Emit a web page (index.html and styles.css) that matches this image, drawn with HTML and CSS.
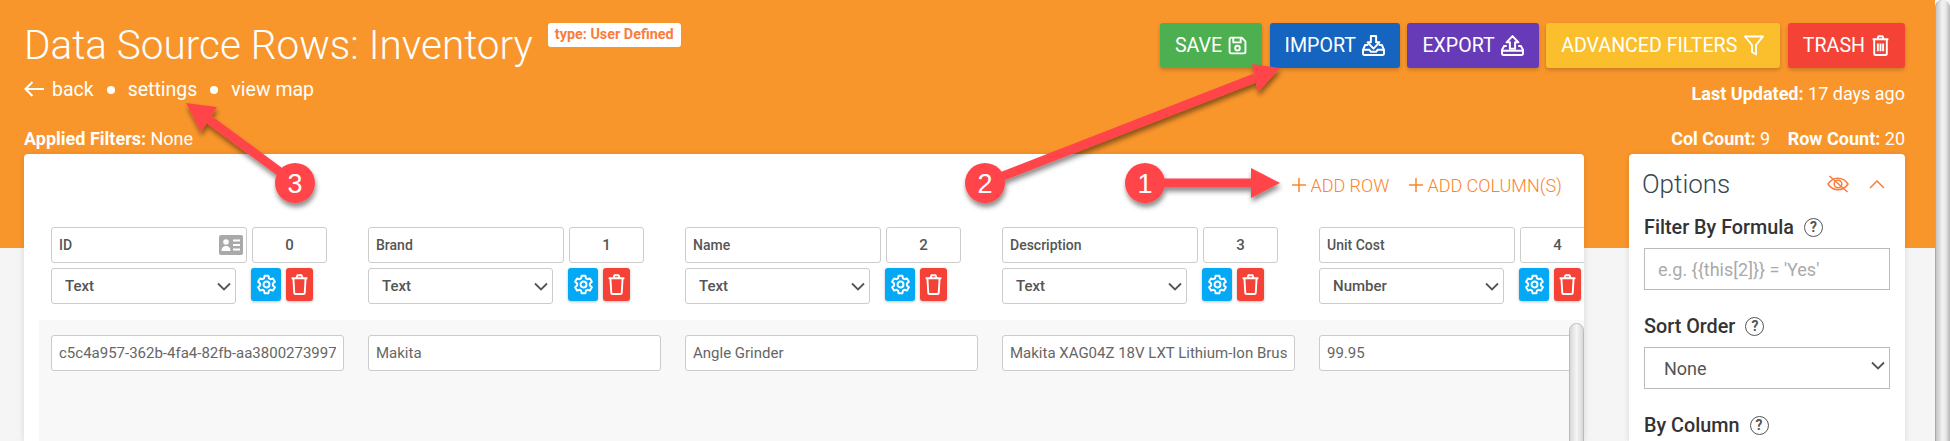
FILE: index.html
```html
<!DOCTYPE html>
<html lang="en">

<head>
  <meta charset="UTF-8">
  <title>Data Source Rows: Inventory</title>
  <link rel="stylesheet" href="styles.css">
</head>

<body>
  <svg class="sprite">
    <symbol id="i-save" viewBox="0 0 18 18" fill="none" stroke="currentColor" stroke-width="1.8">
      <path d="M3 1.500h10l3.500 3.500v10a1.500 1.500 0 0 1-1.500 1.500H3A1.500 1.500 0 0 1 1.500 15V3A1.500 1.500 0 0 1 3 1.500z" />
      <path d="M5 1.500v4.500h7V1.500" />
      <circle cx="9" cy="11.500" r="2.200" />
    </symbol>
    <symbol id="i-import" viewBox="0 0 22 20" fill="none" stroke="currentColor" stroke-width="1.9">
      <path d="M8.500 1h5v6h3.200L11 13 5.300 7h3.200z" stroke-linejoin="round" />
      <path d="M6 9.500H3L1 14v4a1 1 0 0 0 1 1h18a1 1 0 0 0 1-1v-4l-2-4.500h-3" />
      <path d="M1 14h6l1.500 2h5l1.500-2h6" />
    </symbol>
    <symbol id="i-export" viewBox="0 0 22 20" fill="none" stroke="currentColor" stroke-width="1.9">
      <path d="M8.500 13V7H5.300L11 1l5.700 6h-3.200v6z" stroke-linejoin="round" />
      <path d="M5.500 10.500H3L1 14v4a1 1 0 0 0 1 1h18a1 1 0 0 0 1-1v-4l-2-3.500h-2.500" />
      <path d="M1 15h20" />
    </symbol>
    <symbol id="i-filter" viewBox="0 0 21 21" fill="none" stroke="currentColor" stroke-width="1.9" stroke-linejoin="round">
      <path d="M1.500 1.500h18l-7 8.500v9.500l-4-2.500v-7z" />
    </symbol>
    <symbol id="i-trash" viewBox="0 0 17 20" fill="none" stroke="currentColor" stroke-width="1.800" stroke-linejoin="round">
      <path d="M1 4h15M5.500 4l1-2.800h4l1 2.800" />
      <path d="M2.500 4v13.500a1.500 1.500 0 0 0 1.500 1.500h9a1.500 1.500 0 0 0 1.500-1.500V4" />
      <path d="M6 8v7.500M8.500 8v7.500M11 8v7.500" />
    </symbol>
    <symbol id="i-bin" viewBox="0 0 17 20" fill="none" stroke="currentColor" stroke-width="1.800" stroke-linejoin="round">
      <path d="M1 4h15M5.500 4l1-2.800h4l1 2.800" />
      <path d="M2.700 4l.8 13.500a1.500 1.500 0 0 0 1.500 1.500h7a1.500 1.500 0 0 0 1.500-1.500L14.300 4" />
    </symbol>
    <symbol id="i-gear" viewBox="0 0 24 24" fill="none" stroke="currentColor" stroke-width="2.200" stroke-linejoin="round">
      <path d="M9.800 2h4.400l.6 3 1.700 1 2.900-1 2.200 3.800-2.300 2v2.400l2.300 2-2.200 3.800-2.900-1-1.700 1-.6 3H9.800l-.6-3-1.700-1-2.900 1-2.200-3.800 2.300-2v-2.400l-2.300-2L4.600 5l2.900 1 1.700-1z" />
      <circle cx="12" cy="12" r="3.400" />
    </symbol>
    <symbol id="i-down" viewBox="0 0 14 9" fill="none" stroke="currentColor" stroke-width="1.800">
      <path d="M1 1.500l6 6 6-6" />
    </symbol>
    <symbol id="i-plus" viewBox="0 0 14 14" fill="none" stroke="currentColor" stroke-width="1.500">
      <path d="M7 0v14M0 7h14" />
    </symbol>
  </svg>

  <div class="page">
    <header class="top">
      <div>
        <div class="title-row">
          <h1>Data Source Rows: Inventory</h1>
          <span class="badge">type: User Defined</span>
        </div>
        <nav class="crumbs">
          <svg class="back-arrow" viewBox="0 0 20 16" fill="none" stroke="currentColor" stroke-width="2">
            <path d="M8.500 1L1.500 8l7 7M1.500 8H20" />
          </svg>
          <a>back</a>
          <i class="dot"></i>
          <a>settings</a>
          <i class="dot"></i>
          <a>view map</a>
        </nav>
      </div>
      <div class="top-right">
        <div class="actions">
          <button class="btn btn-save">Save <svg class="ico"><use href="#i-save" /></svg></button>
          <button class="btn btn-import">Import <svg class="ico ico-wide"><use href="#i-import" /></svg></button>
          <button class="btn btn-export">Export <svg class="ico ico-wide"><use href="#i-export" /></svg></button>
          <button class="btn btn-filters">Advanced Filters <svg class="ico ico-funnel"><use href="#i-filter" /></svg></button>
          <button class="btn btn-trash">Trash <svg class="ico"><use href="#i-trash" /></svg></button>
        </div>
        <p class="updated"><b>Last Updated:</b> 17 days ago</p>
      </div>
    </header>

    <div class="counts">
      <p><b>Applied Filters:</b> None</p>
      <p><b>Col Count:</b> 9 <b class="row-count">Row Count:</b> 20</p>
    </div>

    <div class="cards">
      <section class="card grid-card">
        <div class="tools">
          <a class="add"><svg class="plus"><use href="#i-plus" /></svg>ADD ROW</a>
          <a class="add"><svg class="plus"><use href="#i-plus" /></svg>ADD COLUMN(S)</a>
        </div>

        <div class="cols">
          <div class="col">
            <div class="col-line">
              <div class="name-box">
                <input class="box name" value="ID">
                <svg class="id-card" viewBox="0 0 24 20">
                  <rect width="24" height="20" rx="2" fill="#a9a9a9" />
                  <circle cx="7" cy="7" r="2.800" fill="#fff" />
                  <path d="M2.500 16c0-3.500 2-5 4.500-5s4.500 1.500 4.500 5z" fill="#fff" />
                  <path d="M14 5.500h7M14 10h7M14 14.500h7" stroke="#fff" stroke-width="1.800" />
                </svg>
              </div>
              <input class="box idx" value="0">
            </div>
            <div class="col-line">
              <div class="select-box"><select class="box pick"><option>Text</option></select><svg class="caret"><use href="#i-down" /></svg></div>
              <button class="sq sq-gear"><svg class="sq-ico"><use href="#i-gear" /></svg></button>
              <button class="sq sq-bin"><svg class="sq-ico"><use href="#i-bin" /></svg></button>
            </div>
          </div>
          <div class="col">
            <div class="col-line">
              <div class="name-box"><input class="box name" value="Brand"></div>
              <input class="box idx" value="1">
            </div>
            <div class="col-line">
              <div class="select-box"><select class="box pick"><option>Text</option></select><svg class="caret"><use href="#i-down" /></svg></div>
              <button class="sq sq-gear"><svg class="sq-ico"><use href="#i-gear" /></svg></button>
              <button class="sq sq-bin"><svg class="sq-ico"><use href="#i-bin" /></svg></button>
            </div>
          </div>
          <div class="col">
            <div class="col-line">
              <div class="name-box"><input class="box name" value="Name"></div>
              <input class="box idx" value="2">
            </div>
            <div class="col-line">
              <div class="select-box"><select class="box pick"><option>Text</option></select><svg class="caret"><use href="#i-down" /></svg></div>
              <button class="sq sq-gear"><svg class="sq-ico"><use href="#i-gear" /></svg></button>
              <button class="sq sq-bin"><svg class="sq-ico"><use href="#i-bin" /></svg></button>
            </div>
          </div>
          <div class="col">
            <div class="col-line">
              <div class="name-box"><input class="box name" value="Description"></div>
              <input class="box idx" value="3">
            </div>
            <div class="col-line">
              <div class="select-box"><select class="box pick"><option>Text</option></select><svg class="caret"><use href="#i-down" /></svg></div>
              <button class="sq sq-gear"><svg class="sq-ico"><use href="#i-gear" /></svg></button>
              <button class="sq sq-bin"><svg class="sq-ico"><use href="#i-bin" /></svg></button>
            </div>
          </div>
          <div class="col">
            <div class="col-line">
              <div class="name-box"><input class="box name" value="Unit Cost"></div>
              <input class="box idx" value="4">
            </div>
            <div class="col-line">
              <div class="select-box"><select class="box pick"><option>Number</option></select><svg class="caret"><use href="#i-down" /></svg></div>
              <button class="sq sq-gear"><svg class="sq-ico"><use href="#i-gear" /></svg></button>
              <button class="sq sq-bin"><svg class="sq-ico"><use href="#i-bin" /></svg></button>
            </div>
          </div>
        </div>

        <div class="rows-panel">
          <div class="rows">
            <input class="box cell" value="c5c4a957-362b-4fa4-82fb-aa3800273997">
            <input class="box cell" value="Makita">
            <input class="box cell" value="Angle Grinder">
            <input class="box cell" value="Makita XAG04Z 18V LXT Lithium-Ion Brushless Cordless">
            <input class="box cell" value="99.95">
          </div>
          <div class="thumb"></div>
        </div>
      </section>

      <aside class="card options">
        <div class="opt-head">
          <h2>Options</h2>
          <svg class="eye" viewBox="0 0 22 18" fill="none" stroke="#f97d3c" stroke-width="1.500">
            <path d="M1 9c2.500-3.800 6-5.800 10-5.800S18.500 5.200 21 9c-2.500 3.800-6 5.800-10 5.800S3.500 12.800 1 9z" />
            <circle cx="11" cy="9" r="3.800" />
            <path d="M2.500 1L20.500 17" />
          </svg>
          <svg class="chev" viewBox="0 0 16 9" fill="none" stroke="#f97d3c" stroke-width="1.500">
            <path d="M1 8l7-7 7 7" />
          </svg>
        </div>
        <div class="field">
          <label>Filter By Formula <i class="help">?</i></label>
          <input class="opt-input" placeholder="e.g. {{this[2]}} = 'Yes'">
        </div>
        <div class="field">
          <label>Sort Order <i class="help">?</i></label>
          <div class="select-box">
            <select class="opt-input opt-select"><option>None</option></select>
            <svg class="caret"><use href="#i-down" /></svg>
          </div>
        </div>
        <div class="field">
          <label>By Column <i class="help">?</i></label>
        </div>
      </aside>
    </div>
  </div>

  <div class="vbar"></div>

  <!-- tutorial callouts drawn on top of the screenshot -->
  <svg class="callouts" viewBox="0 0 1950 441">
    <defs>
      <filter id="drop" x="-20%" y="-20%" width="140%" height="150%">
        <feDropShadow dx="1" dy="4" stdDeviation="2.500" flood-color="#000" flood-opacity=".45" />
      </filter>
    </defs>
    <g filter="url(#drop)" fill="#ff4548">
      <path d="M295 183L209 119.500" stroke="#ff4548" stroke-width="9" />
      <path d="M186 103L217 107L201 132z" />
      <circle cx="295" cy="183" r="20" />
    </g>
    <g filter="url(#drop)" fill="#ff4548">
      <path d="M985 183L1255 78" stroke="#ff4548" stroke-width="9" />
      <path d="M1280 68L1252 64L1258 92z" />
      <circle cx="985" cy="183" r="20" />
    </g>
    <g filter="url(#drop)" fill="#ff4548">
      <path d="M1145 183H1252" stroke="#ff4548" stroke-width="9" />
      <path d="M1280 183L1251 168V198z" />
      <circle cx="1145" cy="183" r="20" />
    </g>
    <text class="callout-num" x="295" y="193">3</text>
    <text class="callout-num" x="985" y="193">2</text>
    <text class="callout-num" x="1145" y="193">1</text>
  </svg>
</body>

</html>
```

FILE: styles.css
```css
* {
  margin: 0;
  padding: 0;
  box-sizing: border-box;
  font-family: Roboto, "Liberation Sans", sans-serif;
}

html,
body {
  height: 441px;
  overflow: hidden;
}

body {
  display: flex;
  position: relative;
  background-color: #f5f5f5;
}

.sprite {
  width: 0;
  height: 0;
  position: absolute;
}

.page {
  flex: 1;
  min-width: 0;
  padding: 0 30px 0 24px;
  background: linear-gradient(#f9962b 248px, #f5f5f5 248px);
  color: #fff;
}

.vbar {
  width: 15px;
  border-radius: 8px 8px 0 0;
  border-left: 1px solid #aaa;
  background: linear-gradient(90deg, #c4c4c4, #f2f2f2 45%, #e8e8e8 70%, #b5b5b5);
}

/* header */
.top {
  display: flex;
  justify-content: space-between;
  height: 127px;
}

.title-row {
  display: flex;
  align-items: flex-start;
  padding-top: 21px;
}

h1 {
  font-size: 40.5px;
  line-height: 48px;
  font-weight: 300;
}

.badge {
  margin: 2px 0 0 15px;
  padding: 0 7px;
  height: 24px;
  line-height: 24px;
  background-color: #fff;
  border-radius: 3px;
  color: #f97d3c;
  font-size: 14.4px;
  font-weight: 700;
}

.crumbs {
  display: flex;
  align-items: center;
  height: 28px;
  margin-top: 6px;
  font-size: 19.5px;
}

.back-arrow {
  width: 20px;
  height: 16px;
  margin-right: 8px;
}

.dot {
  width: 8px;
  height: 8px;
  margin: 2px 13px 0;
  border-radius: 50%;
  background-color: #fff;
}

.top-right {
  display: flex;
  flex-direction: column;
  align-items: flex-end;
  padding-top: 23px;
}

.actions {
  display: flex;
  gap: 7.5px;
}

.btn {
  display: flex;
  align-items: center;
  gap: 6px;
  height: 45px;
  padding: 0 15px;
  border: none;
  border-radius: 3px;
  box-shadow: 0 2px 4px rgba(0, 0, 0, 0.2);
  color: #fff;
  font-size: 19.6px;
  text-transform: uppercase;
}

.btn-save { background-color: #4caf50; }
.btn-import { background-color: #1565c0; }
.btn-export { background-color: #673ab7; }
.btn-filters { background-color: #fbbf2d; }
.btn-trash { background-color: #f44336; }

.ico {
  width: 19px;
  height: 21px;
}

.ico-wide {
  width: 23px;
}

.ico-funnel {
  width: 22px;
}

.updated {
  margin-top: 14px;
  font-size: 18px;
  line-height: 24px;
}

.counts {
  display: flex;
  justify-content: space-between;
  height: 24px;
  margin-bottom: 3px;
  font-size: 18px;
  line-height: 24px;
}

b {
  font-weight: 700;
}

.row-count {
  margin-left: 13px;
}

/* cards */
.cards {
  display: flex;
  gap: 45px;
}

.card {
  height: 287px;
  background-color: #fff;
  border-radius: 4px 4px 0 0;
  box-shadow: 0 1px 6px rgba(0, 0, 0, 0.12);
  overflow: hidden;
}

.grid-card {
  width: 1560px;
  flex: none;
  color: #555;
}

.tools {
  display: flex;
  justify-content: flex-end;
  align-items: center;
  gap: 20px;
  height: 62px;
  margin-bottom: 11px;
  padding-right: 22px;
}

.add {
  display: flex;
  align-items: center;
  gap: 4px;
  color: #f8862b;
  font-size: 18px;
  font-weight: 300;
}

.plus {
  width: 14px;
  height: 14px;
}

.cols {
  display: flex;
  padding-left: 27px;
}

.col {
  flex: none;
  width: 317px;
}

.col-line {
  display: flex;
  align-items: flex-start;
  margin-bottom: 5px;
}

.box {
  height: 36px;
  border: 1px solid #ccc;
  border-radius: 3px;
  outline: none;
  background-color: #fff;
  font-size: 14px;
  color: #555;
}

.name-box {
  position: relative;
  width: 196px;
}

.name {
  width: 100%;
  padding-left: 7px;
  font-weight: 500;
}

.id-card {
  position: absolute;
  right: 4px;
  top: 8px;
  width: 24px;
  height: 20px;
}

.idx {
  width: 75px;
  margin-left: 5px;
  text-align: center;
  font-weight: 500;
  font-size: 15px;
}

.select-box {
  position: relative;
}

.pick {
  display: block;
  width: 185px;
  padding-left: 13px;
  appearance: none;
  font-weight: 500;
  font-size: 15px;
}

.caret {
  position: absolute;
  right: 5px;
  top: 14px;
  width: 14px;
  height: 9px;
  color: #555;
  pointer-events: none;
}

.sq {
  display: flex;
  align-items: center;
  justify-content: center;
  height: 33px;
  border: none;
  border-radius: 3px;
  box-shadow: 0 1px 3px rgba(0, 0, 0, 0.25);
  color: #fff;
}

.sq-gear {
  width: 30px;
  margin-left: 15px;
  background-color: #03a9f4;
}

.sq-bin {
  width: 27px;
  margin-left: 5px;
  background-color: #f44336;
}

.sq-ico {
  width: 21px;
  height: 21px;
}

.rows-panel {
  display: flex;
  height: 200px;
  margin: 11px 0 0 15px;
  background-color: #f8f8f8;
}

.rows {
  flex: 1;
  min-width: 0;
  display: flex;
  align-items: flex-start;
  gap: 24px;
  padding: 15px 0 0 12px;
  overflow: hidden;
}

.cell {
  flex: none;
  width: 293px;
  padding: 0 7px;
  font-size: 15px;
  color: #666;
}

.thumb {
  flex: none;
  width: 15px;
  margin-top: 3px;
  border-radius: 8px 8px 0 0;
  border: 1px solid #bbb;
  background: linear-gradient(90deg, #d8d8d8, #f5f5f5 50%, #d8d8d8);
}

/* options */
.options {
  flex: 1;
  padding: 0 15px;
  color: #333;
}

.opt-head {
  display: flex;
  align-items: center;
  height: 60px;
  margin-left: -2px;
}

h2 {
  flex: 1;
  font-size: 26px;
  font-weight: 300;
  color: #37474f;
}

.eye {
  width: 22px;
  height: 18px;
}

.chev {
  width: 16px;
  height: 9px;
  margin: 0 5px 0 20px;
}

.field {
  margin-bottom: 23px;
}

label {
  display: flex;
  align-items: center;
  gap: 10px;
  height: 26px;
  margin-bottom: 8px;
  font-size: 19.8px;
  font-weight: 500;
}

.help {
  width: 19px;
  height: 19px;
  border: 1.500px solid #555;
  border-radius: 50%;
  color: #555;
  font-size: 14px;
  font-style: normal;
  font-weight: 700;
  line-height: 17px;
  text-align: center;
}

.opt-input {
  display: block;
  width: 246px;
  height: 42px;
  padding-left: 13px;
  border: 1px solid #bbb;
  outline: none;
  background-color: #fff;
  font-size: 18px;
  color: #555;
}

.opt-input::placeholder {
  color: #aaa;
}

.opt-select {
  padding-left: 19px;
  appearance: none;
}

/* callouts */
.callouts {
  position: absolute;
  left: 0;
  top: 0;
  width: 1950px;
  height: 441px;
  pointer-events: none;
}

.callout-num {
  fill: #fff;
  font-family: "Liberation Sans", sans-serif;
  font-size: 27px;
  text-anchor: middle;
}
```
